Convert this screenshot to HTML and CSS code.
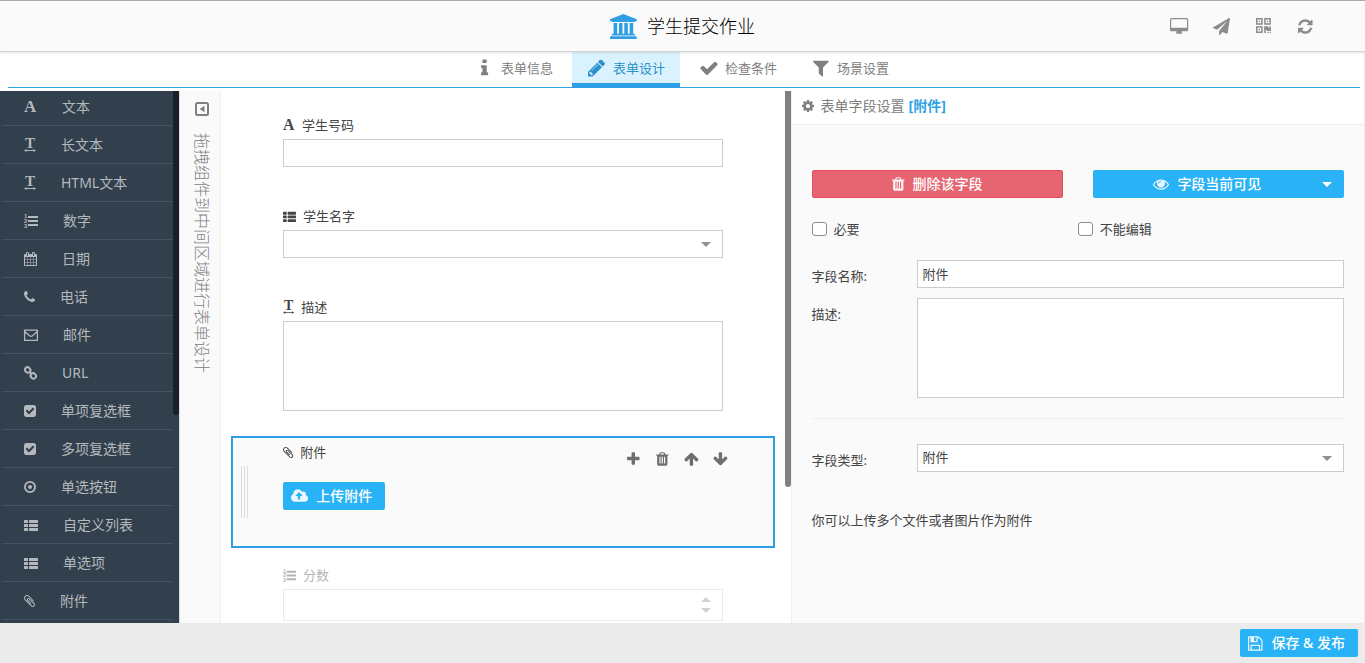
FILE: index.html
```html
<!DOCTYPE html>
<html lang="zh-CN">
<head>
    <meta charset="UTF-8">
    <meta name="viewport" content="width=device-width, initial-scale=1.0">
    <title>学生提交作业</title>
    <link rel="stylesheet" href="styles.css">
</head>
<body>
    <!-- 图标 -->
    <svg class="sprite" aria-hidden="true">
        <defs>
            <path id="bank" d="M832 0l960 384v128h-128q0 26-20.5 45t-48.5 19h-1526q-28 0-48.5-19t-20.5-45h-128v-128zm-704 640h256v768h128v-768h256v768h128v-768h256v768h128v-768h256v768h59q28 0 48.500 19t20.500 45v64h-1664v-64q0-26 20.500-45t48.500-19h59v-768zm1595 960q28 0 48.500 19t20.500 45v128h-1920v-128q0-26 20.500-45t48.500-19h1782z"/>
            <path id="desktop" d="M1728 992v-832q0-13-9.500-22.500t-22.500-9.500h-1600q-13 0-22.500 9.500t-9.500 22.500v832q0 13 9.500 22.500t22.500 9.500h1600q13 0 22.500-9.500t9.500-22.500zm128-832v1088q0 66-47 113t-113 47h-544q0 37 16 77.500t32 71 16 43.500q0 26-19 45t-45 19h-512q-26 0-45-19t-19-45q0-14 16-44t32-70 16-78h-544q-66 0-113-47t-47-113v-1088q0-66 47-113t113-47h1600q66 0 113 47t47 113z"/>
            <path id="plane" d="M1764 11q33 24 27 64l-256 1536q-5 29-32 45-14 8-31 8-11 0-24-5l-453-185-242 295q-18 23-49 23-13 0-22-4-19-7-30.500-23.500t-11.500-36.500v-349l864-1059-1069 925-395-162q-37-14-40-55-2-40 32-59l1664-960q15-9 32-9 20 0 36 11z"/>
            <path id="qrcode" fill-rule="evenodd" d="M0 0h6.300v6.300h-6.300zM1.400 1.400v3.500h3.500v-3.500zM2.500 2.500h1.300v1.300h-1.300zM7.700 0h6.300v6.300h-6.300zM9.100 1.400v3.500h3.500v-3.500zM10.200 2.500h1.300v1.300h-1.300zM0 7.700h6.300v6.300h-6.300zM1.400 9.100v3.500h3.500v-3.500zM2.500 10.200h1.300v1.300h-1.300zM7.700 7.700h3.600v1.200h1.300v-1.200h1.400v4.600h-3.600v-1h-1.200v2.700h-1.500zM10.600 13h1.200v1h-1.200zM12.800 13h1.200v1h-1.200z"/>
            <path id="refresh" d="M1639 1056q0 5-1 7-64 268-268 434.500t-478 166.500q-146 0-282.500-55t-243.500-157l-129 129q-19 19-45 19t-45-19-19-45v-448q0-26 19-45t45-19h448q26 0 45 19t19 45-19 45l-137 137q71 66 161 102t187 36q134 0 250-65t186-179q11-17 53-117 8-23 30-23h192q13 0 22.500 9.500t9.500 22.500zm25-800v448q0 26-19 45t-45 19h-448q-26 0-45-19t-19-45 19-45l138-138q-148-137-349-137-134 0-250 65t-186 179q-11 17-53 117-8 23-30 23h-199q-13 0-22.500-9.500t-9.500-22.500v-7q65-268 270-434.500t480-166.500q146 0 284 55.500t245 156.500l130-129q19-19 45-19t45 19 19 45z"/>
            <path id="info" d="M1216 1344v128q0 26-19 45t-45 19h-512q-26 0-45-19t-19-45v-128q0-26 19-45t45-19h64v-384h-64q-26 0-45-19t-19-45v-128q0-26 19-45t45-19h384q26 0 45 19t19 45v576h64q26 0 45 19t19 45zm-128-1152v192q0 26-19 45t-45 19h-256q-26 0-45-19t-19-45v-192q0-26 19-45t45-19h256q26 0 45 19t19 45z"/>
            <path id="pencil" d="M491 1536l91-91-235-235-91 91v107h128v128h107zm523-928q0-22-22-22-10 0-17 7l-542 542q-7 7-7 17 0 22 22 22 10 0 17-7l542-542q7-7 7-17zm-54-192l416 416-832 832h-416v-416zm683 96q0 53-37 90l-166 166-416-416 166-165q36-38 90-38 53 0 91 38l235 234q37 39 37 91z"/>
            <path id="check" d="M1671 566q0 40-28 68l-724 724-136 136q-28 28-68 28t-68-28l-136-136-362-362q-28-28-28-68t28-68l136-136q28-28 68-28t68 28l294 295 656-657q28-28 68-28t68 28l136 136q28 28 28 68z"/>
            <path id="filter" d="M1595 295q17 41-14 70l-493 493v742q0 42-39 59-13 5-25 5-27 0-45-19l-256-256q-19-19-19-45v-486l-493-493q-31-29-14-70 17-39 59-39h1280q42 0 59 39z"/>
            <g id="font">
                <text class="glyph-a" x="0" y="12">A</text>
            </g>
            <g id="text-width">
                <text class="glyph-t" x="1" y="10">T</text>
                <path d="M0 12.500l2.500-1.500v1h7v-1l2.500 1.500-2.500 1.500v-1h-7v1z"/>
            </g>
            <g id="list-ol">
                <text class="glyph-n" x="0" y="4">1</text>
                <text class="glyph-n" x="0" y="9">2</text>
                <text class="glyph-n" x="0" y="14">3</text>
                <path d="M4 2h10v2h-10zM4 6h10v2h-10zM4 10h10v2h-10z"/>
            </g>
            <path id="calendar" d="M192 1664h288v-288h-288v288zm352 0h320v-288h-320v288zm-352-352h288v-320h-288v320zm352 0h320v-320h-320v320zm-352-384h288v-288h-288v288zm736 736h320v-288h-320v288zm-384-736h320v-288h-320v288zm768 736h288v-288h-288v288zm-384-352h320v-320h-320v320zm-352-864v-288q0-13-9.500-22.500t-22.500-9.500h-64q-13 0-22.500 9.500t-9.500 22.500v288q0 13 9.500 22.500t22.500 9.500h64q13 0 22.500-9.500t9.500-22.500zm736 864h288v-320h-288v320zm-384-384h320v-288h-320v288zm384 0h288v-288h-288v288zm32-480v-288q0-13-9.500-22.500t-22.500-9.500h-64q-13 0-22.500 9.500t-9.500 22.500v288q0 13 9.500 22.500t22.500 9.500h64q13 0 22.500-9.500t9.500-22.500zm384-64v1280q0 52-38 90t-90 38h-1408q-52 0-90-38t-38-90v-1280q0-52 38-90t90-38h128v-96q0-66 47-113t113-47h64q66 0 113 47t47 113v96h384v-96q0-66 47-113t113-47h64q66 0 113 47t47 113v96h128q52 0 90 38t38 90z"/>
            <path id="phone" d="M1600 1240q0 27-10 70.500t-21 68.500q-21 50-122 106-94 51-186 51-27 0-53-3.500t-57.500-12.500-47-14.500-55.500-20.500-49-18q-98-35-175-83-127-79-264-216t-216-264q-48-77-83-175-3-9-18-49t-20.500-55.500-14.500-47-12.500-57.500-3.500-53q0-92 51-186 56-101 106-122 25-11 68.500-21t70.500-10q14 0 21 3 18 6 53 76 11 19 30 54t35 63.500 31 53.500q3 4 17.500 25t21.500 35.500 7 28.500q0 20-28.500 50t-62 55-62 53-28.500 46q0 9 5 22.500t8.500 20.500 14 24 11.500 19q76 137 174 235t235 174q2 1 19 11.500t24 14 20.500 8.500 22.500 5q18 0 46-28.500t53-62 55-62 50-28.500q14 0 28.500 7t35.500 21.500 25 17.500q25 15 53.500 31t63.500 35 54 30q70 35 76 53 3 7 3 21z"/>
            <path id="envelope" fill="none" stroke="currentColor" stroke-width="1.300" stroke-linejoin="round" d="M.6 2.200h12.800v10.200h-12.800zM1 3.800l4.500 4q1.500 1.200 3 0l4.500-4"/>
            <g id="link" fill="none" stroke="currentColor" stroke-width="2">
                <rect x="-2.800" y="-2.500" width="5.600" height="5" rx="2.500" transform="translate(3.700 3.900) rotate(45)"/>
                <rect x="-2.800" y="-2.500" width="5.600" height="5" rx="2.500" transform="translate(9.300 9.900) rotate(45)"/>
                <path d="M5.600 5.900l2 2.200"/>
            </g>
            <path id="check-square" d="M813 1299l614-614q19-19 19-45t-19-45l-102-102q-19-19-45-19t-45 19l-467 467-211-211q-19-19-45-19t-45 19l-102 102q-19 19-19 45t19 45l358 358q19 19 45 19t45-19zm851-883v960q0 119-84.500 203.500t-203.500 84.500h-960q-119 0-203.500-84.500t-84.500-203.500v-960q0-119 84.500-203.500t203.500-84.500h960q119 0 203.500 84.500t84.500 203.500z"/>
            <g id="dot-circle">
                <circle cx="6" cy="7" r="5.100" fill="none" stroke="currentColor" stroke-width="1.800"/>
                <circle cx="6" cy="7" r="2"/>
            </g>
            <path id="th-list" d="M.5 2h3q.5 0 .5.5v2q0 .5-.5.5h-3q-.5 0-.5-.5v-2q0-.5.5-.5zM5.500 2h8q.5 0 .5.5v2q0 .5-.5.5h-8q-.5 0-.5-.5v-2q0-.5.5-.5zM.5 6h3q.5 0 .5.5v2q0 .5-.5.5h-3q-.5 0-.5-.5v-2q0-.5.5-.5zM5.500 6h8q.5 0 .5.5v2q0 .5-.5.5h-8q-.5 0-.5-.5v-2q0-.5.5-.5zM.5 10h3q.5 0 .5.5v2q0 .5-.5.5h-3q-.5 0-.5-.5v-2q0-.5.5-.5zM5.500 10h8q.5 0 .5.5v2q0 .5-.5.5h-8q-.5 0-.5-.5v-2q0-.5.5-.5z"/>
            <path id="paperclip" d="M1596 1385q0 117-79 196t-196 79q-135 0-235-100l-777-776q-113-115-113-271 0-159 110-270t269-111q158 0 273 113l605 606q10 10 10 22 0 16-30.500 46.500t-46.500 30.500q-13 0-23-10l-606-607q-79-77-181-77-106 0-179 75t-73 181q0 105 76 181l776 777q63 63 145 63 64 0 106-42t42-106q0-82-63-145l-581-581q-26-24-60-24-29 0-48 19t-19 48q0 32 25 59l410 410q10 10 10 22 0 16-31 47t-47 31q-12 0-22-10l-410-410q-63-61-63-149 0-82 57-139t139-57q88 0 149 63l581 581q100 98 100 235z"/>
            <g id="caret-square">
                <rect x="1" y="1" width="12" height="12" rx="1.500" fill="none" stroke="currentColor" stroke-width="2"/>
                <path d="M9.500 3.800v6.400l-5-3.200z"/>
            </g>
            <path id="gear" d="M1152 896q0-106-75-181t-181-75-181 75-75 181 75 181 181 75 181-75 75-181zm512-109v222q0 12-8 23t-20 13l-185 28q-19 54-39 91 35 50 107 138 10 12 10 25t-9 23q-27 37-99 108t-94 71q-12 0-26-9l-138-108q-44 23-91 38-16 136-29 186-7 28-36 28h-222q-14 0-24.500-8.500t-11.500-21.500l-28-184q-49-16-90-37l-141 107q-10 9-25 9-14 0-25-11-126-114-165-168-7-10-7-23 0-12 8-23 15-21 51-66.500t54-70.500q-27-50-41-99l-183-27q-13-2-21-12.500t-8-23.500v-222q0-12 8-23t19-13l186-28q14-46 39-92-40-57-107-138-10-12-10-24 0-10 9-23 26-36 98.500-107.500t94.500-71.500q13 0 26 10l138 107q44-23 91-38 16-136 29-186 7-28 36-28h222q14 0 24.500 8.500t11.500 21.500l28 184q49 16 90 37l142-107q9-9 24-9 13 0 25 10 129 119 165 170 7 8 7 22 0 12-8 23-15 21-51 66.500t-54 70.500q26 50 41 98l183 28q13 2 21 12.500t8 23.500z"/>
            <path id="trash" d="M704 1376v-704q0-14-9-23t-23-9h-64q-14 0-23 9t-9 23v704q0 14 9 23t23 9h64q14 0 23-9t9-23zm256 0v-704q0-14-9-23t-23-9h-64q-14 0-23 9t-9 23v704q0 14 9 23t23 9h64q14 0 23-9t9-23zm256 0v-704q0-14-9-23t-23-9h-64q-14 0-23 9t-9 23v704q0 14 9 23t23 9h64q14 0 23-9t9-23zm-544-992h448l-48-117q-7-9-17-11h-317q-10 2-17 11zm928 32v64q0 14-9 23t-23 9h-96v948q0 83-47 143.500t-113 60.500h-832q-66 0-113-58.500t-47-141.500v-952h-96q-14 0-23-9t-9-23v-64q0-14 9-23t23-9h309l70-167q15-37 54-63t79-26h320q40 0 79 26t54 63l70 167h309q14 0 23 9t9 23z"/>
            <path id="eye" d="M1664 960q-152-236-381-353 61 104 61 225 0 185-131.500 316.500t-316.500 131.500-316.500-131.500-131.500-316.500q0-121 61-225-229 117-381 353 133 205 333.500 326.500t434.500 121.500 434.500-121.500 333.500-326.500zm-720-384q0-20-14-34t-34-14q-125 0-214.500 89.500t-89.500 214.500q0 20 14 34t34 14 34-14 14-34q0-86 61-147t147-61q20 0 34-14t14-34zm848 384q0 34-20 69-140 230-376.500 368.500t-499.500 138.500-499.500-139-376.500-368q-20-35-20-69t20-69q140-229 376.500-368t499.500-139 499.500 139 376.500 368q20 35 20 69z"/>
            <path id="cloud-upload" d="M1216 864q0-14-9-23l-352-352q-9-9-23-9t-23 9l-351 351q-10 12-10 24 0 14 9 23t23 9h224v352q0 13 9.500 22.500t22.500 9.500h192q13 0 22.500-9.500t9.500-22.500v-352h224q13 0 22.500-9.500t9.500-22.500zm640 288q0 159-112.500 271.500t-271.500 112.500h-1088q-185 0-316.500-131.500t-131.500-316.500q0-130 70-240t188-165q-2-30-2-43 0-212 150-362t362-150q156 0 285.500 87t188.500 231q71-62 166-62 106 0 181 75t75 181q0 76-41 138 130 31 213.500 135.500t83.500 238.500z"/>
            <path id="plus" d="M1600 736v192q0 40-28 68t-68 28h-416v416q0 40-28 68t-68 28h-192q-40 0-68-28t-28-68v-416h-416q-40 0-68-28t-28-68v-192q0-40 28-68t68-28h416v-416q0-40 28-68t68-28h192q40 0 68 28t28 68v416h416q40 0 68 28t28 68z"/>
            <path id="arrow-up" d="M1675 971q0 51-37 90l-75 75q-38 38-91 38-54 0-90-38l-294-293v704q0 52-37.500 84.500t-90.500 32.500h-128q-53 0-90.500-32.500t-37.500-84.500v-704l-294 293q-36 38-90 38t-90-38l-75-75q-38-38-38-90 0-53 38-91l651-651q35-37 90-37 54 0 91 37l651 651q37 39 37 91z"/>
            <path id="save" d="M512 1536h768v-384h-768v384zm896 0h128v-896q0-14-10-38.500t-20-34.500l-281-281q-10-10-34-20t-39-10v416q0 40-28 68t-68 28h-576q-40 0-68-28t-28-68v-416h-128v1280h128v-416q0-40 28-68t68-28h832q40 0 68 28t28 68v416zm-384-928v-320q0-13-9.500-22.500t-22.500-9.500h-192q-13 0-22.500 9.500t-9.500 22.500v320q0 13 9.500 22.500t22.500 9.500h192q13 0 22.500-9.500t9.500-22.500zm640 32v928q0 40-28 68t-68 28h-1344q-40 0-68-28t-28-68v-1344q0-40 28-68t68-28h928q40 0 88 20t76 48l280 280q28 28 48 76t20 88z"/>
        </defs>
    </svg>

    <header class="header">
        <h1 class="title">
            <svg class="icon" viewBox="-128 0 1920 1792"><use href="#bank"/></svg>
            学生提交作业
        </h1>
        <div class="tools">
            <button type="button" aria-label="预览"><svg class="icon" viewBox="-64 0 1920 1792"><use href="#desktop"/></svg></button>
            <button type="button" aria-label="发送"><svg class="icon" viewBox="0 0 1792 1792"><use href="#plane"/></svg></button>
            <button type="button" aria-label="二维码"><svg class="icon" viewBox="0 0 14 16"><use href="#qrcode"/></svg></button>
            <button type="button" aria-label="刷新"><svg class="icon" viewBox="128 0 1536 1792"><use href="#refresh"/></svg></button>
        </div>
    </header>

    <div class="main">
        <nav class="tabs">
            <a href="#"><span class="tab-icon"><svg class="icon" viewBox="576 0 640 1792"><use href="#info"/></svg></span>表单信息</a>
            <a href="#" class="active"><span class="tab-icon"><svg class="icon" viewBox="128 0 1536 1792"><use href="#pencil"/></svg></span>表单设计</a>
            <a href="#"><span class="tab-icon"><svg class="icon" viewBox="0 0 1792 1792"><use href="#check"/></svg></span>检查条件</a>
            <a href="#"><span class="tab-icon"><svg class="icon" viewBox="192 0 1408 1792"><use href="#filter"/></svg></span>场景设置</a>
        </nav>

        <div class="workspace">
            <!-- 组件列表 -->
            <aside class="sidebar">
                <ul class="widgets">
                    <li><button type="button"><svg class="icon" viewBox="0 0 13 14"><use href="#font"/></svg>文本</button></li>
                    <li><button type="button"><svg class="icon" viewBox="0 0 12 14"><use href="#text-width"/></svg>长文本</button></li>
                    <li><button type="button"><svg class="icon" viewBox="0 0 12 14"><use href="#text-width"/></svg>HTML文本</button></li>
                    <li><button type="button"><svg class="icon" viewBox="0 0 14 14"><use href="#list-ol"/></svg>数字</button></li>
                    <li><button type="button"><svg class="icon" viewBox="64 0 1664 1792"><use href="#calendar"/></svg>日期</button></li>
                    <li><button type="button"><svg class="icon" viewBox="192 0 1408 1792"><use href="#phone"/></svg>电话</button></li>
                    <li><button type="button"><svg class="icon" viewBox="0 0 14 14"><use href="#envelope"/></svg>邮件</button></li>
                    <li><button type="button"><svg class="icon" viewBox="0 0 13 14"><use href="#link"/></svg>URL</button></li>
                    <li><button type="button"><svg class="icon" viewBox="128 0 1536 1792"><use href="#check-square"/></svg>单项复选框</button></li>
                    <li><button type="button"><svg class="icon" viewBox="128 0 1536 1792"><use href="#check-square"/></svg>多项复选框</button></li>
                    <li><button type="button"><svg class="icon" viewBox="0 0 12 14"><use href="#dot-circle"/></svg>单选按钮</button></li>
                    <li><button type="button"><svg class="icon" viewBox="0 0 14 14"><use href="#th-list"/></svg>自定义列表</button></li>
                    <li><button type="button"><svg class="icon" viewBox="0 0 14 14"><use href="#th-list"/></svg>单选项</button></li>
                    <li><button type="button"><svg class="icon" viewBox="192 0 1408 1792"><use href="#paperclip"/></svg>附件</button></li>
                </ul>
                <div class="scroll dark"><div class="thumb"></div></div>
            </aside>

            <div class="hint">
                <button type="button" aria-label="收起"><svg class="icon" viewBox="0 0 14 14"><use href="#caret-square"/></svg></button>
                <p>拖拽组件到中间区域进行表单设计</p>
            </div>

            <!-- 表单 -->
            <section class="canvas">
                <form class="form">
                    <div class="field">
                        <label for="code"><svg class="icon" viewBox="0 0 13 14"><use href="#font"/></svg>学生号码</label>
                        <input class="control" type="text" id="code">
                    </div>
                    <div class="field">
                        <label for="name"><svg class="icon" viewBox="0 0 14 14"><use href="#th-list"/></svg>学生名字</label>
                        <div class="select">
                            <select class="control" id="name"><option></option></select>
                        </div>
                    </div>
                    <div class="field long">
                        <label for="desc"><svg class="icon" viewBox="0 0 12 14"><use href="#text-width"/></svg>描述</label>
                        <textarea class="control" id="desc"></textarea>
                    </div>
                    <div class="field selected">
                        <div class="grip"></div>
                        <label for="upload"><svg class="icon" viewBox="192 0 1408 1792"><use href="#paperclip"/></svg>附件</label>
                        <button type="button" class="btn" id="upload"><svg class="icon" viewBox="-64 0 1920 1792"><use href="#cloud-upload"/></svg>上传附件</button>
                        <div class="actions">
                            <button type="button" aria-label="添加"><svg class="icon" viewBox="192 0 1408 1792"><use href="#plus"/></svg></button>
                            <button type="button" aria-label="删除"><svg class="icon" viewBox="192 0 1408 1792"><use href="#trash"/></svg></button>
                            <button type="button" aria-label="上移"><svg class="icon" viewBox="64 0 1664 1792"><use href="#arrow-up"/></svg></button>
                            <button type="button" aria-label="下移"><svg class="icon down" viewBox="64 0 1664 1792"><use href="#arrow-up"/></svg></button>
                        </div>
                    </div>
                    <div class="field faded">
                        <label for="score"><svg class="icon" viewBox="0 0 14 14"><use href="#list-ol"/></svg>分数</label>
                        <div class="spinner">
                            <input class="control" type="number" id="score">
                        </div>
                    </div>
                </form>
                <div class="scroll"><div class="thumb"></div></div>
            </section>

            <!-- 字段设置 -->
            <section class="settings">
                <h2><svg class="icon" viewBox="128 0 1536 1792"><use href="#gear"/></svg>表单字段设置 <b>[附件]</b></h2>
                <form class="settings-body">
                    <div class="buttons">
                        <button type="button" class="btn danger"><svg class="icon" viewBox="192 0 1408 1792"><use href="#trash"/></svg>删除该字段</button>
                        <button type="button" class="btn visible"><span><svg class="icon" viewBox="0 0 1792 1792"><use href="#eye"/></svg>字段当前可见</span><i class="caret"></i></button>
                    </div>
                    <div class="checks">
                        <label><input type="checkbox">必要</label>
                        <label><input type="checkbox">不能编辑</label>
                    </div>
                    <div class="row">
                        <label for="field-name">字段名称:</label>
                        <input class="control" type="text" id="field-name" value="附件">
                    </div>
                    <div class="row">
                        <label for="field-desc">描述:</label>
                        <textarea class="control" id="field-desc"></textarea>
                    </div>
                    <hr>
                    <div class="row">
                        <label for="field-type">字段类型:</label>
                        <div class="select">
                            <select class="control" id="field-type"><option>附件</option></select>
                        </div>
                    </div>
                    <p class="note">你可以上传多个文件或者图片作为附件</p>
                </form>
            </section>
        </div>

        <footer class="footer">
            <button type="button" class="btn"><svg class="icon" viewBox="128 0 1536 1792"><use href="#save"/></svg>保存 &amp; 发布</button>
        </footer>
    </div>
</body>
</html>
```
FILE: styles.css
```css
*{
    margin: 0;
    padding: 0;
    box-sizing: border-box;
}

body{
    display: flex;
    flex-direction: column;
    height: 100vh;
    overflow: hidden;
    font-family: "Noto Sans", "Noto Sans CJK SC", sans-serif;
    font-size: 13px;
    line-height: 18px;
    color: #444;
    background-color: #fff;
}

button, input, select, textarea{
    font: inherit;
    color: inherit;
}

button{
    border: 0;
    background: none;
    cursor: pointer;
}

ul{
    list-style: none;
}

.sprite{
    position: absolute;
    width: 0;
    height: 0;
}

.icon{
    display: block;
    flex: none;
    height: 14px;
    overflow: visible;
    fill: currentColor;
}

.glyph-a, .glyph-t, .glyph-n{
    font-family: "Liberation Serif", serif;
    font-weight: bold;
}

.glyph-a{
    font-size: 17px;
}

.glyph-t{
    font-size: 15px;
}

.glyph-n{
    font-family: "Liberation Sans", sans-serif;
    font-size: 6px;
}

/* 顶部 */
.header{
    display: grid;
    grid-template-columns: 1fr auto 1fr;
    align-items: center;
    height: 52px;
    flex: none;
    border-top: 1px solid #aaa;
    border-bottom: 1px solid #d5d5d5;
    background-color: #fafafa;
    box-shadow: 0 1px 2px rgba(0, 0, 0, 0.1);
    z-index: 1;
}

.title{
    grid-column: 2;
    display: flex;
    align-items: center;
    gap: 10px;
    font-size: 18px;
    line-height: 26px;
    font-weight: 300;
    color: #000;
}

.title .icon{
    height: 25px;
    color: #2f9fe5;
}

.tools{
    display: flex;
    justify-content: flex-end;
    padding-right: 39px;
    color: #8c8c8c;
}

.tools button{
    display: flex;
    justify-content: center;
    width: 42px;
}

.tools .icon{
    height: 17px;
}

.main{
    display: flex;
    flex-direction: column;
    flex: 1;
    min-height: 0;
    border-right: 1px solid #eee;
}

.tabs{
    display: flex;
    justify-content: center;
    flex: none;
    height: 36px;
    margin: 0 4px 3px 8px;
    border-bottom: 1px solid #2f9fe5;
}

.tabs a{
    display: flex;
    align-items: center;
    gap: 8px;
    height: 35px;
    margin-right: 4px;
    padding: 0 15px 0 16px;
    border-bottom: 4px solid transparent;
    color: #808080;
    text-decoration: none;
}

.tabs a.active{
    border-bottom-color: #2f9fe5;
    background-color: #daf2fd;
    color: #2b90cb;
}

.tab-icon{
    display: flex;
    justify-content: center;
    width: 17px;
}

.tab-icon .icon{
    height: 20px;
}

.workspace{
    display: flex;
    flex: 1;
    min-height: 0;
}

/* 左侧组件 */
.sidebar{
    display: flex;
    flex: none;
    width: 180px;
    overflow: hidden;
    border-right: 1px solid #ddd;
    background-color: #323f4c;
}

.widgets{
    flex: 1;
    margin-top: -3px;
    padding-left: 2px;
}

.widgets li{
    height: 38px;
    border-bottom: 1px solid #45525f;
}

.widgets button{
    display: flex;
    align-items: center;
    gap: 25px;
    width: 100%;
    height: 37px;
    padding-left: 22px;
    font-size: 14px;
    color: #b4b9be;
}

.scroll{
    flex: none;
    width: 6px;
}

.scroll .thumb{
    height: 396px;
    border-radius: 0 0 3px 3px;
    background-color: #808080;
}

.scroll.dark .thumb{
    height: 324px;
    background-color: #1a2028;
}

.hint{
    display: flex;
    flex-direction: column;
    align-items: center;
    gap: 17px;
    flex: none;
    width: 41px;
    padding: 11px 0 0 3px;
    border-right: 1px solid #eee;
    background-color: #fafafa;
    color: #808080;
}

.hint p{
    writing-mode: vertical-rl;
    text-orientation: sideways;
    font-size: 16px;
    font-weight: 300;
    white-space: nowrap;
}

/* 中间表单 */
.canvas{
    display: flex;
    flex: 570;
    overflow: hidden;
}

.form{
    flex: 1;
    padding: 18px 10px 0;
}

.field{
    position: relative;
    margin-bottom: 11px;
    padding: 5px 50px 20px;
    border: 2px solid transparent;
}

.field label{
    display: flex;
    align-items: center;
    gap: 7px;
    margin-bottom: 5px;
}

.field label .icon{
    height: 13px;
}

.control{
    display: block;
    width: 100%;
    height: 28px;
    padding: 0 5px 2px;
    border: 1px solid #ccc;
    border-radius: 0;
    background-color: #fff;
    outline: none;
    resize: none;
    appearance: none;
}

.field textarea{
    height: 90px;
}

.field.long{
    padding-bottom: 12px;
}

.field.selected{
    padding-bottom: 36px;
    border-color: #2f9fe5;
    background-color: #fafafa;
}

.field.selected label{
    margin-bottom: 21px;
}

.field.faded{
    opacity: 0.4;
}

.faded .control{
    height: 32px;
}

.select, .spinner{
    position: relative;
}

.select::after, .spinner::before, .spinner::after{
    content: "";
    position: absolute;
    top: 12px;
    right: 12px;
    border: 5px solid transparent;
    border-top-color: #909090;
    border-bottom-width: 0;
    pointer-events: none;
}

.spinner::before{
    top: 8px;
    border-width: 0 5px 5px;
    border-bottom-color: #909090;
}

.spinner::after{
    top: 19px;
}

input[type="number"]{
    appearance: textfield;
}

.grip{
    position: absolute;
    top: 28px;
    left: 8px;
    width: 7px;
    height: 52px;
    border: 1px solid #ddd;
    border-width: 0 1px;
    background: linear-gradient(#ddd, #ddd) center / 1px 100% no-repeat;
}

.actions{
    position: absolute;
    top: 13px;
    right: 38px;
    display: flex;
    color: #6e6e6e;
}

.actions button{
    display: flex;
    justify-content: center;
    width: 29px;
}

.actions .icon{
    height: 16px;
}

.actions .down{
    transform: rotate(180deg);
}

.btn{
    display: inline-flex;
    align-items: center;
    justify-content: center;
    gap: 8px;
    height: 28px;
    padding: 0 13px 0 8px;
    border-radius: 2px;
    background-color: #29b3f6;
    font-size: 14px;
    font-weight: 500;
    color: #fff;
}

.btn .icon{
    height: 16px;
    opacity: 0.9;
}

.btn.danger{
    padding: 0;
    border: 1px solid #e2505f;
    background-color: #e76571;
}

.btn.visible{
    padding: 0 12px 0 8px;
}

.btn.visible span{
    display: flex;
    flex: 1;
    align-items: center;
    justify-content: center;
    gap: 8px;
}

.caret{
    border: 5px solid transparent;
    border-top-color: #fff;
    border-bottom-width: 0;
}

/* 右侧设置 */
.settings{
    flex: 573;
    overflow: hidden;
    border-left: 1px solid #eee;
    background-color: #fafafa;
}

.settings h2{
    display: flex;
    align-items: center;
    gap: 7px;
    height: 34px;
    padding: 0 10px 4px;
    border-bottom: 1px solid #eee;
    background-color: #fff;
    font-size: 14px;
    font-weight: 400;
    color: #808080;
}

.settings h2 b{
    margin-left: -3px;
    color: #2f9fe5;
    font-weight: 700;
}

.settings-body{
    padding: 45px 20px 0;
}

.buttons{
    display: grid;
    grid-template-columns: 1fr 1fr;
    gap: 30px;
}

.checks{
    display: grid;
    grid-template-columns: 1fr 1fr;
    margin: 22px 0;
}

.checks label{
    display: flex;
    align-items: center;
    gap: 7px;
}

.checks input{
    width: 15px;
    height: 14px;
    border: 1px solid #8c8c8c;
    border-radius: 3px;
    background-color: #fff;
    appearance: none;
}

.checks input:checked{
    background-color: #2f9fe5;
}

.row{
    display: grid;
    grid-template-columns: 105px 1fr;
    margin-bottom: 10px;
}

.row label{
    padding-top: 7px;
}

.row textarea{
    height: 100px;
}

.settings hr{
    margin: 20px 0 25px;
    border: 0;
    border-top: 1px solid #eee;
}

.note{
    margin-top: 39px;
}

.footer{
    display: flex;
    align-items: center;
    justify-content: flex-end;
    flex: none;
    height: 40px;
    padding-right: 6px;
    background-color: #ebebeb;
}

.footer .btn{
    gap: 9px;
}

.footer .icon{
    height: 17px;
}
```
